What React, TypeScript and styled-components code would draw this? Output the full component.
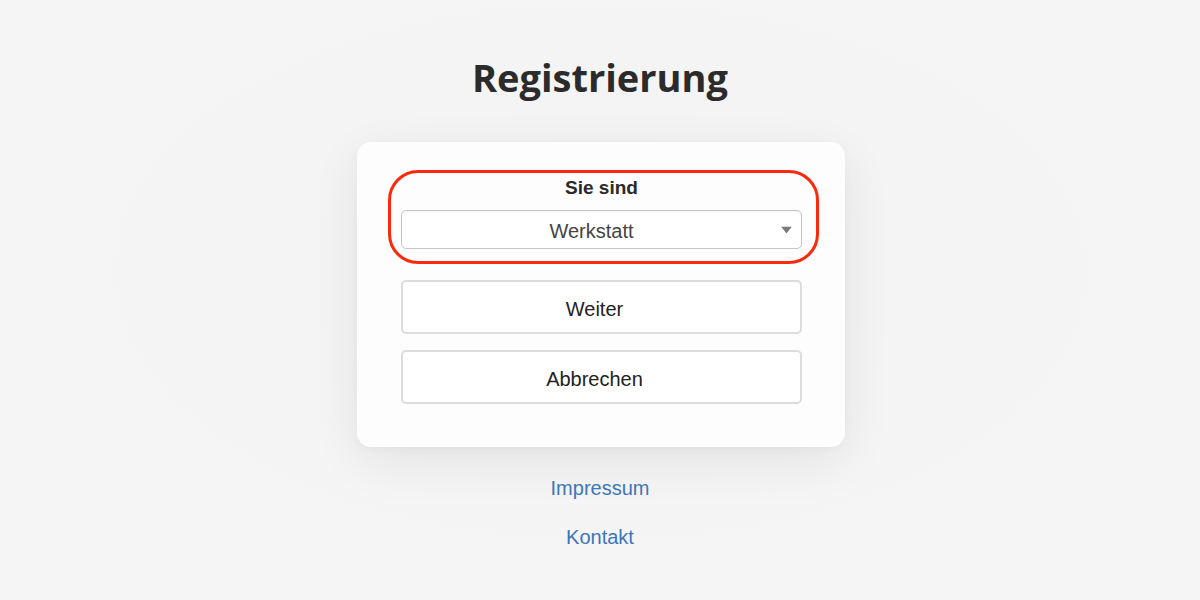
import styled, { createGlobalStyle } from 'styled-components';

const GlobalStyle = createGlobalStyle`
  html, body {
    margin: 0;
    padding: 0;
    background-color: #f4f4f4;
  }

  * {
    box-sizing: border-box;
  }
`;

const Page = styled.main`
  min-height: 600px;
  display: flex;
  flex-direction: column;
  align-items: center;
  padding-top: 52px;
  font-family: 'Liberation Sans', Arial, sans-serif;
  background: radial-gradient(ellipse at 50% 45%, #f1f1f1 0%, #f5f5f5 60%);
`;

const Title = styled.h1`
  margin: 0;
  font-family: 'Open Sans', 'Liberation Sans', sans-serif;
  font-size: 38px;
  line-height: 50px;
  font-weight: 700;
  color: #2b2b2b;
`;

const Card = styled.section`
  width: 488px;
  margin-top: 40px;
  margin-left: 2px;
  padding: 28px 43px 43px 44px;
  background-color: #fdfdfd;
  border-radius: 14px;
  box-shadow: 0 14px 50px rgba(0, 0, 0, 0.07), 0 2px 8px rgba(0, 0, 0, 0.03);
  display: flex;
  flex-direction: column;
`;

// red annotation ring around the role picker
const Highlight = styled.div`
  margin: 0 -17px 0 -13px;
  padding: 3px 14px 12px 10px;
  border: 3px solid #fb2a0c;
  border-radius: 30px;
  display: flex;
  flex-direction: column;
  gap: 10px;
`;

const Label = styled.label`
  text-align: center;
  font-size: 19px;
  line-height: 24px;
  font-weight: 700;
  color: #2a2a2a;
`;

const SelectWrap = styled.div`
  position: relative;
`;

const Select = styled.select`
  width: 100%;
  height: 39px;
  appearance: none;
  -webkit-appearance: none;
  border: 1px solid #c4c4c4;
  border-radius: 5px;
  background-color: #fff;
  box-shadow: inset 0 1px 1px rgba(0, 0, 0, 0.04);
  font-family: 'Liberation Sans', Arial, sans-serif;
  font-size: 20px;
  color: #444;
  text-align: center;
  text-align-last: center;
  padding: 2px 44px 0 24px;
  outline: none;
`;

const Caret = styled.svg`
  position: absolute;
  right: 10px;
  top: 50%;
  transform: translateY(-50%);
  pointer-events: none;
`;

const Button = styled.button`
  margin-top: 16px;
  height: 54px;
  width: 100%;
  padding: 5px 14px 0 0;
  background-color: #fff;
  border: 2px solid #dcdcdc;
  border-radius: 5px;
  font-family: 'Liberation Sans', Arial, sans-serif;
  font-size: 20px;
  color: #222;
  cursor: pointer;
`;

const Links = styled.nav`
  margin-top: 29px;
  display: flex;
  flex-direction: column;
  align-items: center;
  gap: 25px;
`;

const FooterLink = styled.a`
  font-size: 20px;
  line-height: 24px;
  color: #3d76b9;
  text-decoration: none;
`;

export default function App() {
  return (
    <>
      <GlobalStyle />
      <Page>
        <Title>Registrierung</Title>
        <Card>
          <Highlight>
            <Label htmlFor="role">Sie sind</Label>
            <SelectWrap>
              <Select id="role" defaultValue="werkstatt">
                <option value="werkstatt">Werkstatt</option>
                <option value="haendler">Händler</option>
              </Select>
              <Caret width="11" height="7" viewBox="0 0 11 7">
                <path d="M0 0 L11 0 L5.5 7 Z" fill="#7a7a7a" />
              </Caret>
            </SelectWrap>
          </Highlight>
          <Button>Weiter</Button>
          <Button>Abbrechen</Button>
        </Card>
        <Links>
          <FooterLink href="#">Impressum</FooterLink>
          <FooterLink href="#">Kontakt</FooterLink>
        </Links>
      </Page>
    </>
  );
}
